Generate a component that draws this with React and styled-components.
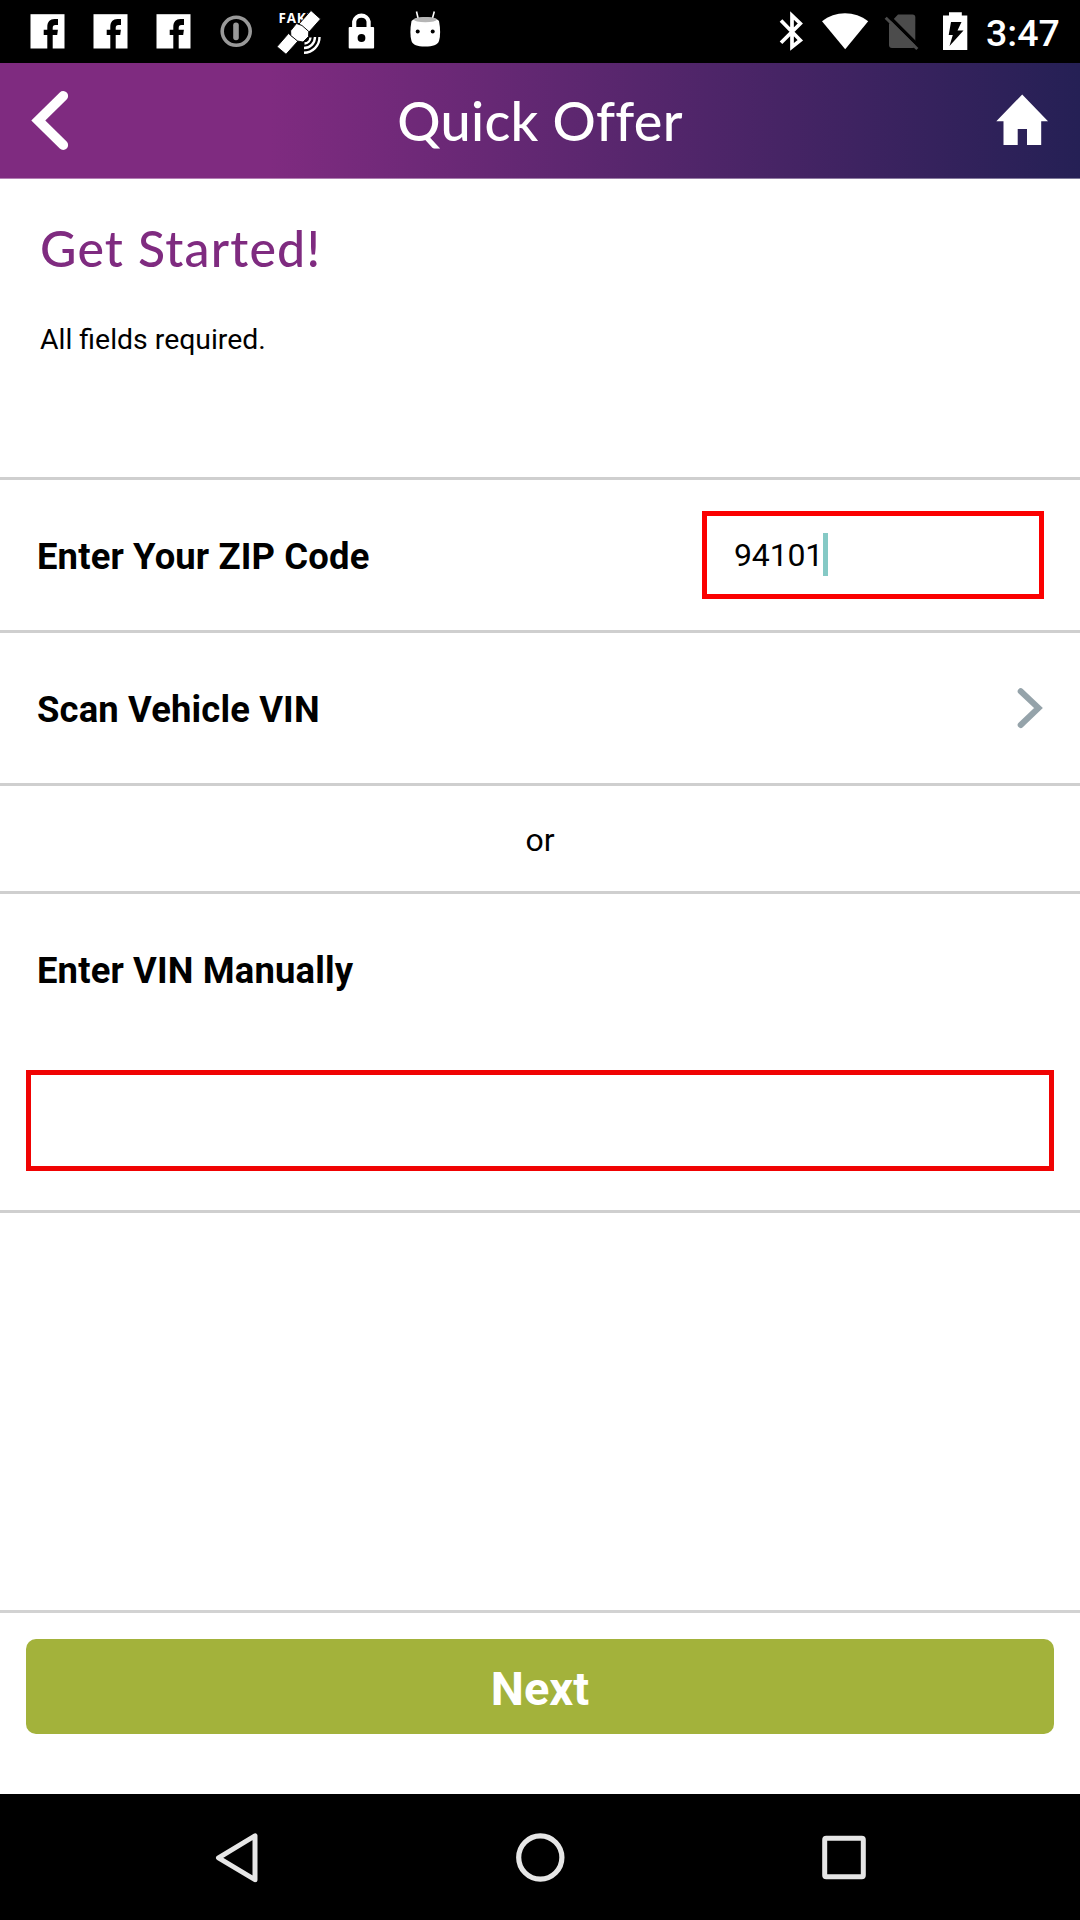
import React from "react";
import styled, { createGlobalStyle } from "styled-components";

const GlobalStyle = createGlobalStyle`
  * { box-sizing: border-box; }
  body { margin: 0; background: #fff; }
`;

const Screen = styled.div`
  display: flex;
  flex-direction: column;
  width: 1080px;
  height: 1920px;
  overflow: hidden;
  background: #fff;
  color: #000;
  font-family: Roboto, "Liberation Sans", sans-serif;
`;

const StatusBar = styled.div`
  display: flex;
  justify-content: space-between;
  height: 63px;
  padding: 0 18px 0 24px;
  background: #000;
  color: #fff;
`;

const IconGroup = styled.div`
  display: flex;
  gap: ${(p) => p.$gap || 0}px;
`;

const Drawing = styled.svg`
  display: block;
  flex: none;
`;

const Clock = styled.span`
  width: 80px;
  padding: 0 0 0 4px;
  font-size: 37.5px;
  font-weight: 500;
  line-height: 66px;
  white-space: nowrap;
`;

const Header = styled.header`
  display: flex;
  align-items: center;
  justify-content: space-between;
  height: 116px;
  padding: 0 28px;
  border-bottom: 1px solid rgba(255, 255, 255, 0.4);
  background: linear-gradient(90deg, #7f2b80 0%, #7f2b80 25%, #252055 100%);
`;

const Title = styled.h1`
  margin: 0;
  color: #fff;
  font: 500 54px/64px Lato, sans-serif;
  letter-spacing: 0.3px;
`;

const Intro = styled.section`
  height: 298px;
  padding: 39px 40px 0;
`;

const Heading = styled.h2`
  margin: 0;
  color: #7f2b80;
  font: 500 50px/60px Lato, sans-serif;
  letter-spacing: 1.2px;
`;

const Note = styled.p`
  margin: 42px 0 0;
  font-size: 28.4px;
  line-height: 40px;
`;

const Row = styled.div`
  display: flex;
  align-items: center;
  justify-content: ${(p) => (p.$center ? "center" : "space-between")};
  height: ${(p) => p.$height}px;
  padding: 0 36px 0 ${(p) => (p.$center ? 36 : 37)}px;
  border-top: 3px solid #cfcfcf;
`;

const Label = styled.label`
  padding-top: 4px;
  font-size: 36.4px;
  font-weight: 700;
  letter-spacing: 0.15px;
  line-height: 44px;
`;

const Separator = styled.span`
  padding-top: 2px;
  font-size: 32px;
  line-height: 40px;
`;

const ZipField = styled.div`
  display: flex;
  align-items: center;
  width: 342px;
  height: 88px;
  padding: 0 27px;
  border: 5px solid #fb0000;
  font-size: 32px;
  letter-spacing: -0.15px;
`;

const Caret = styled.i`
  width: 5px;
  height: 43px;
  margin-bottom: 2px;
  background: #85c9c5;
`;

const VinSection = styled.section`
  display: flex;
  flex-direction: column;
  height: 322px;
  padding: 51px 26px 0;
  border-top: 3px solid #cfcfcf;
  border-bottom: 3px solid #cfcfcf;
`;

const VinLabel = styled(Label)`
  height: 125px;
  padding-left: 11px;
`;

const VinField = styled.div`
  height: 101px;
  border: 5px solid #f00303;
`;

const Spacer = styled.div`
  flex: 1;
`;

const Footer = styled.footer`
  height: 184px;
  padding: 26px 26px 0;
  border-top: 3px solid #d2d2d2;
`;

const NextButton = styled.button`
  display: block;
  width: 100%;
  height: 95px;
  padding: 5px 0 0;
  border: 0;
  border-radius: 10px;
  background: #a3b23b;
  color: #fff;
  font: 700 47px/58px Roboto, sans-serif;
`;

const NavBar = styled.nav`
  display: flex;
  justify-content: space-between;
  height: 126px;
  padding: 0 204px;
  background: #000;
`;

// Each icon's paths use screen coordinates; the view box selects its cell.
function Icon({ x, y = 0, w = 48, h = 63, children }) {
  return (
    <Drawing width={w} height={h} viewBox={`${x} ${y} ${w} ${h}`}>
      {children}
    </Drawing>
  );
}

function FacebookIcon() {
  return (
    <Icon x={24}>
      <rect x="30.5" y="14.2" width="34" height="34.3" fill="#fff" />
      <path
        d="M47.3 49V35H43.7V29.7H47.3V27C47.3 21.8 50 19 54.5 19H58V25H55.5C53.5 25 52.7 26 52.7 28V29.7H57.9L57.2 35H52.7V49Z"
        fill="#000"
      />
    </Icon>
  );
}

function StatusIcons() {
  return (
    <IconGroup $gap={15}>
      <FacebookIcon />
      <FacebookIcon />
      <FacebookIcon />
      <Icon x={213}>
        <circle cx="236.2" cy="31.3" r="14" fill="none" stroke="#999" strokeWidth="3.6" />
        <path d="M236 25.3V37.5" stroke="#999" strokeWidth="5.6" strokeLinecap="round" />
      </Icon>
      <Icon x={276}>
        <text x="278.5" y="22.8" fill="#fff" fontFamily="Open Sans, sans-serif" fontWeight="700" fontSize="13.4" letterSpacing="0.8">
          FAKE
        </text>
        <g fill="#fff" stroke="#000" strokeWidth="0.9" strokeLinejoin="round">
          <path d="M311 10.5L320.5 19L309 32L299 24Z" />
          <path d="M277 46.7L286 54.3L298 41L288.5 33.5Z" />
          <path d="M296.5 23.5L302 25.5L308.8 31.5L308.5 36.5L303 42L297.5 41L290.8 35.5L290.6 30.8Z" />
        </g>
        <g fill="none" stroke="#fff" strokeWidth="2.4">
          <path d="M319.5 37A15.5 15.5 0 0 1 304 52.7" />
          <path d="M315 37A11 11 0 0 1 304 48" />
          <path d="M310.5 37.5A6.5 6.5 0 0 1 304.5 43.5" />
        </g>
      </Icon>
      <Icon x={339}>
        <path d="M354.2 29V21.5A7.3 7 0 0 1 368.6 21.5V29" fill="none" stroke="#fff" strokeWidth="4.2" />
        <rect x="348.7" y="27" width="25.4" height="21.5" rx="1" fill="#fff" />
        <circle cx="361.5" cy="38" r="3.9" fill="#000" />
      </Icon>
      <Icon x={402}>
        <path d="M416.5 11.5L418.5 20M434.3 11.5L432 20" stroke="#fff" strokeWidth="1.6" />
        <path
          d="M411.5 21C417 16 434 16 439 21C440.5 29 440.5 36 439 41C437.5 45 433 46.5 425 46.5C417 46.5 413 45 411.5 41C410 36 410 29 411.5 21Z"
          fill="#fff"
        />
        <ellipse cx="425.3" cy="19.6" rx="11.6" ry="2.7" fill="#b5b5b5" />
        <circle cx="417.7" cy="31.5" r="2" fill="#000" />
        <circle cx="432.7" cy="31.5" r="2" fill="#000" />
      </Icon>
    </IconGroup>
  );
}

function SystemIcons() {
  return (
    <IconGroup>
      <Icon x={768}>
        <path d="M781 20.5L800.3 40.3L792 47V15.5L800.3 23.5L781 42.8" fill="none" stroke="#fff" strokeWidth="3.7" />
      </Icon>
      <Icon x={816} w={58}>
        <path d="M822 21.3C835 10.5 855 10.5 868.2 21.3L845.2 49.3Z" fill="#fff" />
      </Icon>
      <Icon x={874} w={54}>
        <path d="M898 14.5H912.5Q915.3 14.5 915.3 17.3V45Q915.3 48 912.5 48H892Q889 48 889 45V24Z" fill="#4c4c4c" />
        <path d="M888 15.5L919 46.5" stroke="#000" strokeWidth="3.4" />
        <path d="M885.7 17.7L917.3 49" stroke="#4c4c4c" strokeWidth="3" />
      </Icon>
      <Icon x={928} w={54}>
        <path d="M949 12.2H961.8V15.5H967.3V50H943V15.5H949Z" fill="#fff" />
        <path d="M951 22H961.5L957.5 30.5H963.5L949.5 46L952.8 35H948.7Z" fill="#000" />
      </Icon>
      <Clock>3:47</Clock>
    </IconGroup>
  );
}

export default function App() {
  return (
    <Screen>
      <GlobalStyle />
      <StatusBar>
        <StatusIcons />
        <SystemIcons />
      </StatusBar>
      <Header>
        <Icon x={28} y={85} w={56} h={71}>
          <path d="M63.2 96L38.3 120.4L63.2 145" fill="none" stroke="#fff" strokeWidth="9.8" strokeLinecap="round" />
        </Icon>
        <Title>Quick Offer</Title>
        <Icon x={996} y={85} w={56} h={71}>
          <path d="M1022.2 94.5L1048 121.3H1041.2V145H1027V129H1017.7V145H1003.5V121.3H996.3Z" fill="#fff" />
        </Icon>
      </Header>
      <Intro>
        <Heading>Get Started!</Heading>
        <Note>All fields required.</Note>
      </Intro>
      <Row $height={153}>
        <Label>Enter Your ZIP Code</Label>
        <ZipField>
          94101
          <Caret />
        </ZipField>
      </Row>
      <Row $height={153}>
        <Label>Scan Vehicle VIN</Label>
        <Icon x={1014} y={684} w={30} h={48}>
          <path d="M1020.7 691.2L1038.5 708L1020.7 725" fill="none" stroke="#95a3aa" strokeWidth="6" strokeLinecap="round" />
        </Icon>
      </Row>
      <Row $height={108} $center>
        <Separator>or</Separator>
      </Row>
      <VinSection>
        <VinLabel>Enter VIN Manually</VinLabel>
        <VinField />
      </VinSection>
      <Spacer />
      <Footer>
        <NextButton>Next</NextButton>
      </Footer>
      <NavBar>
        <Icon x={204} y={1794} w={66} h={126}>
          <path d="M255 1835.8V1879.7L218.5 1857.8Z" fill="none" stroke="#e6e6e6" strokeWidth="5" strokeLinejoin="round" />
        </Icon>
        <Icon x={507} y={1794} w={66} h={126}>
          <circle cx="540.3" cy="1857.5" r="21.6" fill="none" stroke="#e6e6e6" strokeWidth="5.2" />
        </Icon>
        <Icon x={810} y={1794} w={66} h={126}>
          <rect x="824.7" y="1838.3" width="38.6" height="38.4" rx="1.5" fill="none" stroke="#e6e6e6" strokeWidth="5" />
        </Icon>
      </NavBar>
    </Screen>
  );
}
